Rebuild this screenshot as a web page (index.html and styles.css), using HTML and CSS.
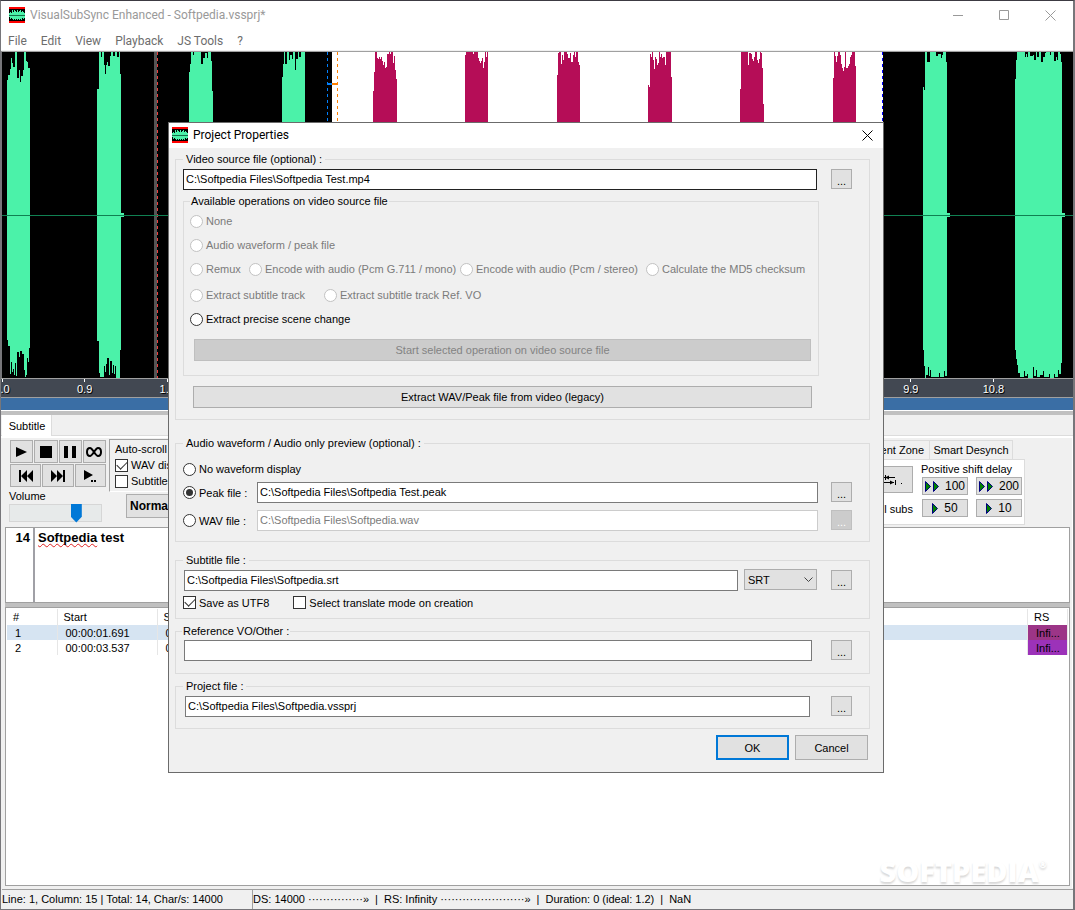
FILE: index.html
```html
<!DOCTYPE html>
<html lang="en">
<head>
<meta charset="utf-8">
<title>VisualSubSync Enhanced - Softpedia.vssprj*</title>
<link rel="stylesheet" href="styles.css">
</head>
<body>
<svg class="defs" aria-hidden="true">
  <symbol id="app-icon" viewBox="0 0 16 16">
    <path fill="#000" d="M0 0h16v16H0z"/>
    <path fill="#f00" d="M0 0h16v2H0zM0 14h16v2H0z"/>
    <path fill="#4bf2a9" d="M0 6H1V5H2V6H3V3H4V5H5V3H6V4H7V5H8V3H9V5H10V4H11V3H12V5H13V4H14V5H15V6H16V11H15V12H14V11H13V13H12V12H11V13H10V12H9V13H8V12H7V13H6V12H5V13H4V12H3V11H2V12H1V10H0z"/>
    <path fill="#16704a" d="M0 8h16v1H0z"/>
  </symbol>
  <symbol id="close" viewBox="0 0 11 11"><path fill="none" stroke="currentColor" d="M.5.5l10 10M10.5.5l-10 10"/></symbol>
  <symbol id="tri" viewBox="0 0 7 11"><path fill="#008000" stroke="#000080" d="M.5.5v10l5-5z"/></symbol>
</svg>

<main class="window">
  <header class="titlebar">
    <svg class="app-icon"><use href="#app-icon"/></svg>
    <h1>VisualSubSync Enhanced - Softpedia.vssprj*</h1>
    <div class="caption-buttons">
      <button aria-label="Minimize"><svg width="11" height="11"><path stroke="currentColor" d="M0 5.5h10"/></svg></button>
      <button aria-label="Maximize"><svg width="11" height="11"><path fill="none" stroke="currentColor" d="M.5.5h9v9h-9z"/></svg></button>
      <button aria-label="Close"><svg width="11" height="11"><use href="#close"/></svg></button>
    </div>
  </header>
  <nav class="menu">
    <button>File</button><button>Edit</button><button>View</button><button>Playback</button><button>JS Tools</button><button>?</button>
  </nav>

  <svg class="wave" viewBox="2 52 1071 326" preserveAspectRatio="none" shape-rendering="crispEdges" role="img" aria-label="Audio waveform">
    <path fill="#000" d="M2 52h1071v326H2z"/>
    <path fill="#fff" d="M332 52h551v326H332z"/>
    <path fill="#555" d="M154 52h3v326h-3z"/>
    <path stroke="#f03c3c" stroke-dasharray="3 3" d="M157.500 52v326"/>
    <g fill="#4bf2a9">
      <path d="M7 80H8V75H10V69H11V58H12V63H13V67H15V52H17V78H19V70H20V82H21V76H23V70H24V52H26V61H27V62H28V68H30V348H29V362H28V358H27V375H26V377H25V370H24V354H22V351H20V357H19V352H17V376H16V363H15V375H14V369H13V372H12V362H11V374H10V346H8V340H7z"/>
      <path d="M97 89H99V52H101V57H102V52H104V65H105V74H106V65H107V62H108V66H110V56H111V52H113V56H115V52H117V57H119V52H120V74H121V213H124V217H121V350H120V378H116V366H115V374H114V365H113V373H112V361H110V375H109V358H107V364H106V372H105V366H104V377H100V373H99V341H97z"/>
      <path d="M189 72H190V64H191V52H193V55H194V52H201V64H203V58H205V53H207V58H208V52H211V61H212V91H213V378H189z"/>
      <path d="M282 77H283V64H284V52H285V64H287V52H289V60H290V55H292V59H293V52H295V70H296V59H298V52H299V57H301V52H305V378H282z"/>
      <path d="M923 87H924V90H925V52H927V62H930V52H936V56H938V54H941V58H942V55H943V52H946V62H947V213H950V217H947V376H945V371H944V377H940V373H939V377H931V370H930V376H929V367H928V375H926V378H925V366H924V350H923z"/>
      <path d="M1015 79H1016V60H1017V52H1025V57H1026V54H1027V57H1028V52H1030V56H1033V55H1034V60H1036V52H1037V57H1039V52H1041V62H1043V57H1045V53H1046V52H1050V55H1051V52H1054V61H1056V57H1057V60H1058V52H1060V54H1061V62H1062V213H1065V217H1062V363H1061V374H1059V370H1058V377H1055V374H1054V378H1050V374H1049V377H1044V371H1043V375H1040V377H1037V370H1036V376H1034V367H1033V378H1028V374H1027V376H1025V371H1024V377H1020V373H1018V365H1017V359H1016V350H1015z"/>
    </g>
    <g fill="#b50d57">
      <path d="M373 91H374V72H375V52H377V58H378V59H379V57H380V59H381V57H382V61H383V65H384V62H385V68H386V67H387V54H389V52H390V54H391V52H393V63H394V56H395V70H396V79H397V378H373z"/>
      <path d="M465 55H466V52H473V54H474V52H478V58H479V61H480V63H481V61H482V58H483V68H484V62H485V52H486V57H487V52H488V378H465z"/>
      <path d="M557 75H558V53H559V52H561V64H562V55H563V60H564V52H567V54H568V58H570V53H571V62H573V55H574V52H575V57H576V52H578V62H579V65H580V378H557z"/>
      <path d="M648 85H649V87H650V54H651V57H652V52H653V60H654V69H655V57H656V59H657V65H658V63H659V52H660V57H661V54H662V58H663V57H665V65H666V52H671V77H672V378H648z"/>
      <path d="M740 89H741V52H748V65H749V53H751V54H752V59H753V61H754V57H755V52H757V60H758V63H759V59H760V52H761V53H762V68H763V104H764V378H740z"/>
      <path d="M833 78H834V52H835V56H836V62H837V56H838V52H840V55H841V64H842V68H843V71H844V67H845V52H846V68H848V66H849V64H850V57H851V55H852V52H855V66H856V378H833z"/>
    </g>
    <path stroke="#108052" d="M2 215.500h1071"/>
    <path stroke="#0080ff" stroke-dasharray="3 3" d="M327.500 52v326"/>
    <path stroke="#ff8000" stroke-dasharray="3 3" d="M337.500 52v326"/>
    <path fill="#0080ff" d="M327 83h5v2h-5z"/>
    <path fill="#ff8000" d="M332 83h6v2h-6z"/>
    <path stroke="#00f" stroke-dasharray="3 3" d="M882.500 52v326"/>
  </svg>
  <div class="ruler">
    <div class="ticks">
      <span><b>0.0</b></span><span><b>0.9</b></span><span><b>1.8</b></span><span></span><span></span><span></span><span></span><span></span><span></span><span></span><span></span><span><b>9.9</b></span><span><b>10.8</b></span>
    </div>
  </div>
  <div class="scroll-strip"></div>
  <div class="splitter"></div>

  <div class="main-tabs"><button class="tab-active">Subtitle</button></div>
  <section class="page">
    <div class="controls">
      <div class="player">
        <div class="player-row">
          <button aria-label="Play"><svg width="12" height="12"><path d="M0 1v10l11-5z"/></svg></button>
          <button aria-label="Stop"><svg width="12" height="12"><path d="M0 0h12v12H0z"/></svg></button>
          <button aria-label="Pause"><svg width="12" height="12"><path d="M0 0h4v12H0zM8 0h4v12H8z"/></svg></button>
          <button aria-label="Loop"><svg width="16" height="10"><path fill="none" stroke="#000" stroke-width="2" d="M8 5C6 2 5 1 4 1 2 1 1 2.500 1 5s1 4 3 4c1 0 2-1 4-4s3-4 4-4c2 0 3 1.500 3 4s-1 4-3 4c-1 0-2-1-4-4z"/></svg></button>
        </div>
        <div class="player-row">
          <button aria-label="Previous"><svg width="14" height="12"><path d="M0 0h2v12H0zM8 0v12L2 6zM14 0v12L8 6z"/></svg></button>
          <button aria-label="Next"><svg width="14" height="12"><path d="M12 0h2v12h-2zM0 0v12l6-6zM6 0v12l6-6z"/></svg></button>
          <button aria-label="Play from cursor"><svg width="13" height="12"><path d="M0 0v10l9-5zM7 10h2v2H7zM10 10h2v2h-2z"/></svg></button>
        </div>
        <label for="vol">Volume</label>
        <input id="vol" class="volume" type="range" min="0" max="100" value="76">
      </div>
      <div class="modes">
        <div class="autoscroll">
          <span>Auto-scroll</span>
          <label><input type="checkbox" checked>WAV display</label>
          <label><input type="checkbox">Subtitles</label>
        </div>
        <button class="mode">Normal</button>
      </div>
      <div class="tools">
        <div class="tool-tabs"><button>Current Zone</button><button>Smart Desynch</button></div>
        <div class="tool-page">
          <div class="swap">
            <button aria-label="Shift to cursor"><svg width="24" height="12"><path fill="none" stroke="#000" d="M0 3.500h11M1.500 1v5M0 8.500h10M11.500 6v5"/><path d="M1 3.500l4-2v4zM10 8.500l-4-2v4zM17 9h1v1h-1z"/></svg></button>
            <span>All subs</span>
          </div>
          <div class="shift">
            <span>Positive shift delay</span>
            <div class="shift-grid">
              <button><svg class="tri"><use href="#tri"/></svg><svg class="tri"><use href="#tri"/></svg><i>100</i></button>
              <button><svg class="tri"><use href="#tri"/></svg><svg class="tri"><use href="#tri"/></svg><i>200</i></button>
              <button><svg class="tri"><use href="#tri"/></svg><i>50</i></button>
              <button><svg class="tri"><use href="#tri"/></svg><i>10</i></button>
            </div>
          </div>
        </div>
      </div>
    </div>

    <div class="editor">
      <div class="count">14</div>
      <div class="text" role="textbox" contenteditable="true" spellcheck="false"><span class="misspelt">Softpedia</span> test</div>
    </div>
    <div class="splitter"></div>
    <div class="list">
      <table>
        <colgroup><col class="c-num"><col class="c-time"><col class="c-time"><col><col class="c-rs"></colgroup>
        <thead><tr><th>#</th><th>Start</th><th>Stop</th><th></th><th>RS</th></tr></thead>
        <tbody>
          <tr class="selected"><td>1</td><td>00:00:01.691</td><td>00:00:01.691</td><td></td><td class="rs-a">Infi...</td></tr>
          <tr><td>2</td><td>00:00:03.537</td><td>00:00:03.537</td><td></td><td class="rs-b">Infi...</td></tr>
        </tbody>
      </table>
      <div class="watermark">SOFTPEDIA<sup>®</sup></div>
    </div>
  </section>

  <footer class="status">
    <div class="status-pos">Line: 1, Column: 15 | Total: 14, Char/s: 14000</div>
    <div class="status-info"><span>DS: 14000 ···············»</span><span>|</span><span>RS: Infinity ·······················»</span><span>|</span><span>Duration: 0 (ideal: 1.2)</span><span>|</span><span>NaN</span></div>
  </footer>
</main>

<form class="dialog" role="dialog" aria-labelledby="dlg-title">
  <header class="dialog-title">
    <svg class="app-icon"><use href="#app-icon"/></svg>
    <h2 id="dlg-title">Project Properties</h2>
    <button type="button" aria-label="Close"><svg width="11" height="11"><use href="#close"/></svg></button>
  </header>
  <div class="dialog-body">
    <fieldset class="group video">
      <legend>Video source file (optional) :</legend>
      <div class="row">
        <input class="box hot" type="text" aria-label="Video source file" value="C:\Softpedia Files\Softpedia Test.mp4">
        <button type="button" class="browse">...</button>
      </div>
      <fieldset class="group operations">
        <legend>Available operations on video source file</legend>
        <div class="op"><label class="off"><input type="radio" name="op" disabled>None</label></div>
        <div class="op"><label class="off"><input type="radio" name="op" disabled>Audio waveform / peak file</label></div>
        <div class="op four">
          <label class="off"><input type="radio" name="op" disabled>Remux</label>
          <label class="off"><input type="radio" name="op" disabled>Encode with audio (Pcm G.711 / mono)</label>
          <label class="off"><input type="radio" name="op" disabled>Encode with audio (Pcm / stereo)</label>
          <label class="off"><input type="radio" name="op" disabled>Calculate the MD5 checksum</label>
        </div>
        <div class="op two">
          <label class="off"><input type="radio" name="op" disabled>Extract subtitle track</label>
          <label class="off"><input type="radio" name="op" disabled>Extract subtitle track Ref. VO</label>
        </div>
        <div class="op"><label><input type="radio" name="op">Extract precise scene change</label></div>
        <button type="button" class="push start" disabled>Start selected operation on video source file</button>
      </fieldset>
      <button type="button" class="push legacy">Extract WAV/Peak file from video (legacy)</button>
    </fieldset>

    <fieldset class="group audio">
      <legend>Audio waveform / Audio only preview (optional) :</legend>
      <div class="op"><label><input type="radio" name="wav">No waveform display</label></div>
      <div class="row">
        <label class="lead"><input type="radio" name="wav" checked>Peak file :</label>
        <input class="box" type="text" aria-label="Peak file" value="C:\Softpedia Files\Softpedia Test.peak">
        <button type="button" class="browse">...</button>
      </div>
      <div class="row">
        <label class="lead"><input type="radio" name="wav">WAV file :</label>
        <input class="box" type="text" aria-label="WAV file" value="C:\Softpedia Files\Softpedia.wav" disabled>
        <button type="button" class="browse" disabled>...</button>
      </div>
    </fieldset>

    <fieldset class="group subtitle">
      <legend>Subtitle file :</legend>
      <div class="row">
        <input class="box" type="text" aria-label="Subtitle file" value="C:\Softpedia Files\Softpedia.srt">
        <div class="combo">
          <select aria-label="Subtitle format"><option>SRT</option></select>
          <svg class="chevron" width="9" height="6"><path fill="none" stroke="#444" d="M.5.5l4 4 4-4"/></svg>
        </div>
        <button type="button" class="browse">...</button>
      </div>
      <div class="checks">
        <label><input type="checkbox" checked>Save as UTF8</label>
        <label><input type="checkbox">Select translate mode on creation</label>
      </div>
    </fieldset>

    <fieldset class="group reference">
      <legend>Reference VO/Other :</legend>
      <div class="row">
        <input class="box" type="text" aria-label="Reference VO/Other">
        <button type="button" class="browse">...</button>
      </div>
    </fieldset>

    <fieldset class="group project">
      <legend>Project file :</legend>
      <div class="row">
        <input class="box" type="text" aria-label="Project file" value="C:\Softpedia Files\Softpedia.vssprj">
        <button type="button" class="browse">...</button>
      </div>
    </fieldset>

    <div class="actions">
      <button type="submit" class="default">OK</button>
      <button type="button">Cancel</button>
    </div>
  </div>
</form>
</body>
</html>
```

FILE: styles.css
```css
* { box-sizing: border-box; }

body {
  margin: 0;
  background: #4b4a50;
  color: #000;
  font: 11px/14px "Liberation Sans", Arial, sans-serif;
}

button, input, select { font: inherit; color: inherit; margin: 0; }

button {
  display: flex;
  align-items: center;
  justify-content: center;
  padding: 0;
  border: 1px solid #adadad;
  border-radius: 0;
  background: #e1e1e1;
  white-space: nowrap;
}

svg { display: block; flex: none; }
.defs { position: absolute; width: 0; height: 0; }
.app-icon { width: 16px; height: 16px; }
h1, h2 { margin: 0; font-weight: 400; }

/* Main window */
.window {
  display: flex;
  flex-direction: column;
  min-height: 100vh;
  border: solid #77767a;
  border-width: 1px 2px 1px 1px;
  border-top-color: #3c3a42;
  background: #f0f0f0;
}

.titlebar {
  display: flex;
  align-items: center;
  gap: 5px;
  height: 29px;
  padding: 0 0 1px 8px;
  background: #fff;
  color: #999;
}
.titlebar, .menu, .dialog-title { font-family: Roboto, sans-serif; }
.titlebar h1, .menu button, .dialog-title h2 { font-size: 12px; line-height: 16px; }
.caption-buttons { display: flex; margin-left: auto; }
.caption-buttons button { width: 46px; height: 28px; border: 0; background: none; color: #999; }

.menu { display: flex; height: 20px; padding-top: 2px; background: #fff; color: #6d6d6d; }
.menu button { padding: 0 7px; border: 0; background: none; }

.wave {
  width: 100%;
  height: 327px;
  border-top: 1px solid #a0a0a0;
  border-left: 1px solid #77767a;
  margin-top: 1px;
}

.ruler {
  height: 20px;
  overflow: hidden;
  border: solid #a0a0a0;
  border-width: 1px 0;
  background: #424852;
  color: #fff;
}
.ticks { display: grid; grid-template-columns: repeat(13, 1fr); margin: 0 -3px 0 1px; }
.ticks span { display: flex; justify-content: center; width: 0; height: 18px; padding-top: 3px; }
.ticks b { font-weight: 400; line-height: 15px; text-shadow: 1px 1px #000; }
.ticks b::before { content: ""; display: block; width: 1px; height: 3px; margin: -3px auto 0; background: #fff; }

.scroll-strip { height: 13px; background: #3a6ea5; border-bottom: 1px solid #fff; }
.splitter { height: 4px; background: #c0c0c0; }

.main-tabs { display: flex; height: 21px; padding-left: 1px; border-bottom: 1px solid #dcdcdc; }
.tab-active { width: 50px; height: 21px; padding-left: 1px; border: 0; border-right: 1px solid #dcdcdc; background: #fff; }

.page { display: flex; flex: 1; flex-direction: column; padding: 0 2px 2px 4px; border-right: 1px solid #fff; border-top: 2px solid #fff; }

.controls { display: flex; align-items: flex-start; height: 89px; padding-top: 1px; }

.player { display: flex; flex-direction: column; width: 96px; margin: 1px 0 0 5px; }
.player-row { display: flex; gap: 1px; height: 23px; margin-bottom: 1px; }
.player-row button { flex: 1; }
.player label { margin: 1px 0 0 -1px; }
.player .volume { margin: 1px 4px 0 -1px; }

.volume { appearance: none; height: 18px; border: 1px solid #d6d6d6; background: #e7eaea; }
.volume::-webkit-slider-thumb {
  appearance: none;
  width: 11px;
  height: 19px;
  background: #0078d7;
  clip-path: polygon(0 0, 100% 0, 100% 70%, 50% 100%, 0 70%);
}

.modes { display: flex; flex-direction: column; gap: 2px; margin-left: 3px; }
.autoscroll {
  display: flex;
  flex-direction: column;
  gap: 2px;
  width: 150px;
  height: 53px;
  padding: 2px 0 0 5px;
  border: solid #a0a0a0;
  border-width: 1px 0 0 1px;
  border-bottom: 1px solid #fff;
}
.mode { width: 90px; height: 24px; margin-left: 17px; padding-left: 3px; justify-content: flex-start; font-weight: 700; font-size: 12px; }

.tools { margin: 1px 45px 0 auto; }
.tool-tabs { display: flex; height: 19px; margin-right: 12px; justify-content: flex-end; }
.tool-tabs button { padding: 0 5px; border-color: #dcdcdc; border-bottom: 0; background: #f0f0f0; }
.tool-tabs button + button { border-left: 0; width: 83px; }
.tool-page { display: flex; gap: 8px; width: 240px; height: 66px; padding: 2px 2px 0 0; justify-content: flex-end; border: 1px solid #dcdcdc; background: #fff; }
.swap { display: flex; flex-direction: column; align-items: flex-end; gap: 9px; padding-top: 4px; }
.swap button { width: 54px; height: 27px; justify-content: flex-end; padding-right: 4px; }
.shift { display: flex; flex-direction: column; gap: 1px; }
.shift-grid { display: grid; grid-template-columns: 46px 46px; gap: 4px 8px; margin-left: 1px; }
.shift-grid button { height: 18px; gap: 1px; }
.shift-grid i { font-style: normal; font-size: 12px; margin-left: 4px; }
.tri { width: 7px; height: 11px; }

.editor { display: flex; height: 76px; border: 1px solid #a0a0a0; background: #fff; font-size: 13px; font-weight: 700; line-height: 16px; }
.count { width: 29px; padding: 2px 3px; border-right: 2px solid #a0a0a6; text-align: right; }
.text { flex: 1; padding: 2px 3px; outline: 0; }
.misspelt { text-decoration: underline wavy #e02020 1px; text-decoration-skip-ink: none; text-underline-offset: 1px; }

.list { position: relative; flex: 1; border: 1px solid #a0a0a0; padding: 1px 1px 0 1px; background: #fff; }
table { width: 100%; table-layout: fixed; border-collapse: collapse; }
.c-num { width: 50px; }
.c-time { width: 100px; }
.c-rs { width: 40px; }
th, td { height: 15px; padding: 0 0 0 8px; font-weight: 400; text-align: left; line-height: 14px; white-space: nowrap; border-right: 1px solid #e6e6e6; }
th { height: 16px; padding-left: 6px; }
.selected td { background: #d6e4f2; }
.selected .rs-a { background: #9c3587; }
.rs-b { background: #9c32b9; }

.watermark {
  position: absolute;
  right: 22px;
  bottom: -3px;
  font: 800 29px/34px "Open Sans", sans-serif;
  color: #fff;
  text-shadow: 0 2px 2px #d8d8d8;
}
.watermark sup { font-size: 10px; line-height: 10px; vertical-align: 14px; }

.status { display: flex; align-items: center; height: 20px; margin: 1px 0 0 1px; border-top: 1px solid #a0a0a0; white-space: pre; }
.status-pos { width: 250px; line-height: 19px; }
.status-info { display: flex; gap: 6px; line-height: 19px; border-left: 1px solid #a0a0a0; }

/* Check boxes and radio buttons */
label { display: flex; align-items: center; white-space: nowrap; }
.off { color: #7b7b7b; }

[type="radio"], [type="checkbox"] {
  appearance: none;
  display: grid;
  place-items: center;
  flex: none;
  width: 13px;
  height: 13px;
  margin-right: 3px;
  border: 1px solid #333;
  background: #fff;
}
[type="radio"] { border-radius: 50%; }
[type="radio"]:disabled { border-color: #c2c2c2; }
[type="radio"]:checked::before { content: ""; width: 7px; height: 7px; border-radius: 50%; background: #333; }
[type="checkbox"]:checked::before {
  content: "";
  width: 9px;
  height: 5px;
  margin-top: -3px;
  border: solid #333;
  border-width: 0 0 1px 1px;
  rotate: -45deg;
}

/* Project Properties dialog */
.dialog {
  position: absolute;
  top: 122px;
  left: 168px;
  right: 191px;
  border: 1px solid #6b6b6b;
  background: #f0f0f0;
}
.dialog-title { display: flex; align-items: center; gap: 5px; height: 25px; padding: 0 0 1px 3px; background: #fff; }
.dialog-title button { width: 32px; height: 24px; margin-left: auto; border: 0; background: none; }

.dialog-body { padding: 4px 13px 12px 6px; }

.group { min-width: 0; margin: 0; padding: 3px 17px 11px 7px; border: 1px solid #dcdcdc; }
.group legend { margin-left: 0; padding: 0 3px; line-height: 14px; }

.row { display: flex; gap: 14px; }
.box { flex: 1; min-width: 0; height: 21px; padding: 0 2px 1px; border: 1px solid #7a7a7a; background: #fff; outline: 0; }
.box.hot { border-color: #222; }
.box:disabled { border-color: #ccc; color: #7b7b7b; background: #fff; }
.browse { width: 21px; height: 20px; padding-top: 4px; }
.browse:disabled { border-color: #bfbfbf; background: #ccc; color: #fff; }

.operations { margin: 4px 33px 0 0; padding: 1px 7px 14px 6px; }
.operations legend { padding: 0 1px; }
.op { display: grid; height: 24px; align-items: center; justify-content: start; }
.four { grid-template-columns: 59px 211px 186px auto; margin-bottom: 2px; }
.two { grid-template-columns: 134px auto; }

.push { height: 22px; }
.push:disabled { border-color: #bfbfbf; background: #ccc; color: #838383; }
.start { width: calc(100% - 4px); margin: 8px 0 0 4px; }
.legacy { width: calc(100% - 50px); margin: 10px 0 0 10px; }

.audio { margin-top: 16px; padding: 7px 17px 10px 7px; }
.audio .row { gap: 13px; margin-top: 7px; }
.audio .op + .row { margin-top: 1px; }
.lead { width: 61px; }

.subtitle { margin-top: 11px; padding: 3px 17px 5px 7px; }
.subtitle .row { padding-left: 1px; }
.combo { position: relative; width: 73px; margin: -1px 0 0 -8px; }
.combo select { appearance: none; width: 100%; height: 21px; padding: 0 3px; border: 1px solid #adadad; border-radius: 0; background: #e1e1e1; }
.chevron { position: absolute; right: 4px; top: 8px; pointer-events: none; }
.checks { display: flex; gap: 24px; height: 22px; padding-top: 1px; }

.reference, .project { margin-top: 5px; }
.reference { padding: 2px 17px 12px 8px; }
.reference .row { gap: 19px; }
.reference legend { padding: 0 1px; margin-left: -2px; }
.project { padding: 3px 17px 11px 9px; }
.project legend { margin-left: -2px; }
.project .row { gap: 21px; }

.actions { display: flex; justify-content: flex-end; gap: 6px; margin: 6px 2px 0 0; }
.actions button { width: 73px; height: 25px; }
.actions .default { border: 2px solid #0078d7; }
```
